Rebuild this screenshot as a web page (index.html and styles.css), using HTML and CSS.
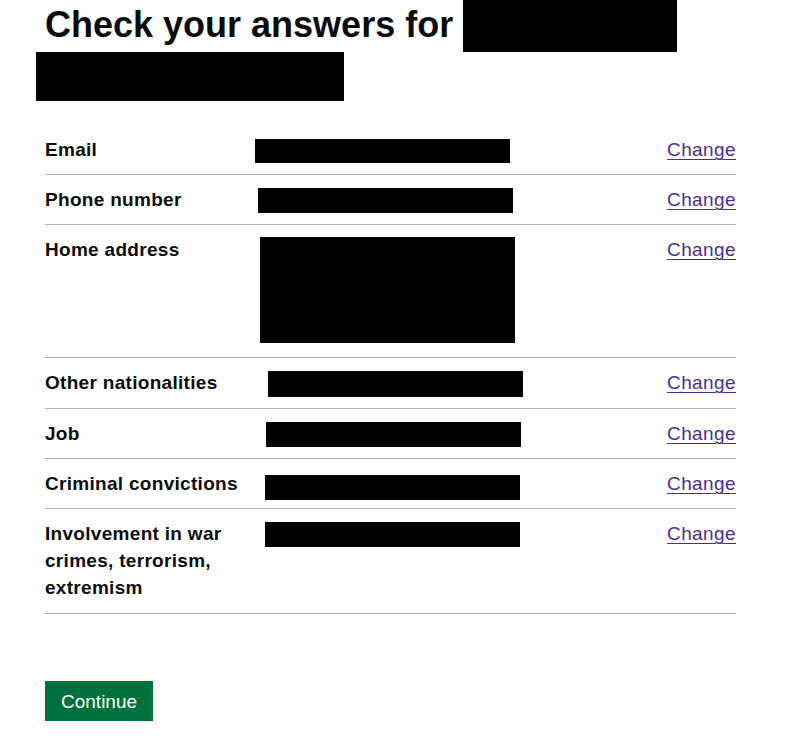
FILE: index.html
```html
<!DOCTYPE html>
<html lang="en">
<head>
    <meta charset="UTF-8">
    <title>Check your answers</title>
    <link rel="stylesheet" href="styles.css">
</head>
<body>

<main class="page">
    <h1 class="heading">Check your answers for <span class="redacted redacted--name"></span><br><span class="redacted redacted--name2"></span></h1>

    <dl class="summary-list">
        <div class="summary-row">
            <dt class="summary-key">Email</dt>
            <dd class="summary-value"><span class="redacted redacted--email"></span></dd>
            <dd class="summary-action"><a href="#" class="link">Change</a></dd>
        </div>
        <div class="summary-row">
            <dt class="summary-key">Phone number</dt>
            <dd class="summary-value"><span class="redacted redacted--phone"></span></dd>
            <dd class="summary-action"><a href="#" class="link">Change</a></dd>
        </div>
        <div class="summary-row">
            <dt class="summary-key">Home address</dt>
            <dd class="summary-value"><span class="redacted redacted--address"></span></dd>
            <dd class="summary-action"><a href="#" class="link">Change</a></dd>
        </div>
        <div class="summary-row">
            <dt class="summary-key">Other nationalities</dt>
            <dd class="summary-value"><span class="redacted redacted--nationality"></span></dd>
            <dd class="summary-action"><a href="#" class="link">Change</a></dd>
        </div>
        <div class="summary-row">
            <dt class="summary-key">Job</dt>
            <dd class="summary-value"><span class="redacted redacted--job"></span></dd>
            <dd class="summary-action"><a href="#" class="link">Change</a></dd>
        </div>
        <div class="summary-row">
            <dt class="summary-key">Criminal convictions</dt>
            <dd class="summary-value"><span class="redacted redacted--criminal"></span></dd>
            <dd class="summary-action"><a href="#" class="link">Change</a></dd>
        </div>
        <div class="summary-row">
            <dt class="summary-key">Involvement in war crimes, terrorism, extremism</dt>
            <dd class="summary-value"><span class="redacted redacted--war"></span></dd>
            <dd class="summary-action"><a href="#" class="link">Change</a></dd>
        </div>
    </dl>

    <button class="button">Continue</button>
</main>

</body>
</html>
```

FILE: styles.css
```css
body {
    margin: 0;
    background: #fff;
    color: #0b0c0c;
    font-family: "Liberation Sans", Arial, sans-serif;
}
.page {
    width: 691px;
    padding-left: 45px;
}
.heading {
    margin: 0 0 23px;
    font-size: 36px;
    line-height: 50px;
    font-weight: 700;
}
/* 遮挡块 */
.redacted {
    display: inline-block;
    background: #000;
    vertical-align: top;
}
.redacted--name {
    width: 214px;
    height: 52px;
}
.redacted--name2 {
    width: 308px;
    height: 49px;
    margin-left: -9px;
}
.summary-list {
    margin: 0 0 67px;
}
.summary-row {
    display: flex;
    padding: 11px 0;
    border-bottom: 1px solid #b1b4b6;
    font-size: 19px;
    line-height: 27px;
}
.summary-row:last-child {
    padding-bottom: 12px;
}
.summary-key {
    width: 210px;
    font-weight: 700;
    letter-spacing: 0.3px;
}
.summary-value {
    flex: 1;
    margin: 0;
}
.summary-action {
    margin: 0;
    text-align: right;
}
.link {
    color: #4c2c92;
    letter-spacing: 0.4px;
    text-decoration: underline;
    text-underline-offset: 3px;
    text-decoration-thickness: 1px;
}
.redacted--email { width: 255px; height: 24px; margin-top: 3px; }
.redacted--phone { width: 255px; height: 25px; margin-top: 2px; margin-left: 3px; }
.redacted--address { width: 255px; height: 106px; margin: 1px 0 3px 5px; }
.redacted--nationality { width: 255px; height: 26px; margin-top: 2px; margin-left: 13px; }
.redacted--job { width: 255px; height: 25px; margin-top: 2px; margin-left: 11px; }
.redacted--criminal { width: 255px; height: 25px; margin: 5px 0 -3px 10px; }
.redacted--war { width: 255px; height: 25px; margin-top: 2px; margin-left: 10px; }
.button {
    padding: 8px 16px 7px;
    border: 0;
    border-radius: 0;
    background: #00703c;
    box-shadow: 0 2px 0 #002d18;
    color: #fff;
    font-family: inherit;
    font-size: 19px;
    line-height: 25px;
    cursor: pointer;
}
```
